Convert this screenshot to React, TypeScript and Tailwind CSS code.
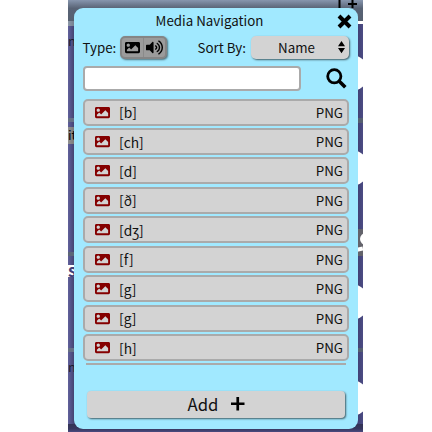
import React from "react";
import { FaImage, FaVolumeUp } from "react-icons/fa";

const items = ["[b]", "[ch]", "[d]", "[ð]", "[dʒ]", "[f]", "[g]", "[g]", "[h]"];

function Node() {
  return <div className="-ml-[16px] h-[36px] w-[36px] shrink-0 rounded-full bg-white" />;
}

/* The dimmed page that shows around the dialog */
function Backdrop() {
  return (
    <div className="col-start-1 row-start-1 ml-[68px] flex h-[432px] w-[294.5px] flex-col overflow-hidden bg-[#3b3b66]">
      <div className="flex h-[21px] shrink-0 justify-end bg-linear-to-b from-[#8796ae] via-[#586375] via-40% to-[#566070]">
        <svg viewBox="0 0 26 20" className="h-[20px] w-[26px]" stroke="black" strokeWidth="2" fill="none">
          <path d="M2.5 0V8M11 4H20M15.5 0V8" />
        </svg>
      </div>
      <div className="flex h-[403px] shrink-0 justify-between">
        <div className="flex w-[16px] flex-col overflow-hidden bg-linear-to-r from-[#61619c] via-[#42426f] via-40% to-[#333355] text-[13px] text-[#1b1b2c]">
          <div className="h-[5px] shrink-0 bg-linear-to-r from-[#8d99aa] to-[#4d5663]" />
          <div className="h-[92px] shrink-0 pt-[5px] leading-[19px]">n</div>
          <div className="h-[4px] shrink-0 bg-[#667085]" />
          <div className="h-[5px] shrink-0" />
          <div className="h-[17px] shrink-0 bg-linear-to-r from-[#929292] to-[#555] leading-[16px] text-black">it</div>
          <div className="h-[108px] shrink-0" />
          <div className="h-[4px] shrink-0 bg-[#5c6678]" />
          <div className="h-[9px] shrink-0" />
          <div className="h-[12px] shrink-0 bg-white text-[17px] font-bold leading-[9px] text-[#404078]">s</div>
          <div className="h-[71px] shrink-0" />
          <div className="h-[4px] shrink-0 bg-[#667085]" />
          <div className="pt-[5px] leading-[19px]">n</div>
        </div>
        <div className="flex w-[14px] flex-col overflow-hidden bg-linear-to-l from-[#4c4c84] via-[#404073] via-40% to-[#333355]">
          <div className="h-[3px] shrink-0 bg-white" />
          <div className="h-[30.5px] shrink-0" />
          <Node />
          <div className="h-[27.5px] shrink-0" />
          <div className="h-[5px] shrink-0 bg-[#555f70]" />
          <div className="h-[27px] shrink-0" />
          <Node />
          <div className="h-[43px] shrink-0" />
          <div className="flex h-[27px] shrink-0 flex-col items-end bg-[#63636b] pt-[4px]">
            <div className="-mr-[9px] h-[12px] w-[12px] shrink-0 rounded-full bg-white" />
            <div className="mt-[3px] h-[4px] w-[14px] shrink-0 -rotate-12 bg-white" />
          </div>
          <div className="h-[28px] shrink-0" />
          <Node />
          <div className="h-[28px] shrink-0" />
          <div className="h-[4px] shrink-0 bg-[#555f70]" />
          <div className="h-[28px] shrink-0" />
          <Node />
        </div>
      </div>
      <div className="flex-1 bg-linear-to-b from-[#333355] via-[#37375e] via-60% to-[#4a4a80]" />
    </div>
  );
}

export default function App() {
  return (
    <div className="grid h-[432px] w-[432px] grid-cols-1 grid-rows-1 overflow-hidden bg-white font-['Noto_Sans_CJK_SC','Noto_Sans',sans-serif] text-[13.33px] text-[#111]">
      <Backdrop />
      <div className="z-10 col-start-1 row-start-1 ml-[74px] mt-[7.5px] flex h-[421px] w-[284px] flex-col rounded-[9px] bg-[#a1e9ff] pl-[8.5px] pr-[9px]">
        <header className="flex h-[27px] items-center">
          <h1 className="flex-1 pb-px text-center">Media Navigation</h1>
          <svg viewBox="0 0 15 15" className="-mr-[2.5px] h-[15px] w-[15px]">
            <path d="M2 2L13 13M13 2L2 13" stroke="black" strokeWidth="4" fill="none" />
          </svg>
        </header>
        <div className="flex h-[25px] items-center">
          <span className="pt-px">Type:</span>
          <div className="ml-[4px] flex h-[23px] w-[46.5px] rounded-[5px] border-2 border-[#858585] bg-[#9b9b9b] text-black shadow-[1px_1px_2px_rgba(0,0,0,0.5)]">
            <div className="flex flex-1 items-center justify-center border-r border-[#8a8a8a]"><FaImage size={15} /></div>
            <div className="flex flex-1 items-center justify-center"><FaVolumeUp size={17} /></div>
          </div>
          <span className="ml-auto pt-px">Sort By:</span>
          <div className="ml-[5px] flex h-[23px] w-[98px] items-center rounded-[5px] bg-[#d3d3d3] pr-1 shadow-[1px_1px_2px_rgba(0,0,0,0.6)]">
            <span className="flex-1 pl-[4px] pt-px text-center">Name</span>
            <svg viewBox="0 0 8 14" className="h-[14px] w-[7px]"><path d="M4 0L8 6H0ZM4 14L0 8H8Z" /></svg>
          </div>
        </div>
        <div className="mt-[6px] flex h-[25.5px] items-center justify-between">
          <input aria-label="Search" className="h-[25.5px] w-[218.5px] rounded-[4px] border-2 border-[#aaa] bg-white px-2 outline-none" />
          <svg viewBox="0 0 21 21" className="mr-[2.5px] h-[21px] w-[21px]" fill="none" stroke="black">
            <circle cx="8.3" cy="8.3" r="6.6" strokeWidth="2.8" />
            <path d="M13 13L19.3 19.3" strokeWidth="3.6" />
          </svg>
        </div>
        <div className="mt-[7.5px] h-[266px] shrink-0 overflow-hidden">
          {items.map((name, i) => (
            <div key={i} className="mb-[2.45px] flex h-[27px] items-center rounded-[5px] border-2 border-[#aaa] bg-[#d3d3d3] pl-[10px] pr-[4px]">
              <FaImage size={15} color="#850000" />
              <span className="ml-[9.5px] flex-1 pt-px text-[13.8px]">{name}</span>
              <span className="pt-px">PNG</span>
            </div>
          ))}
          <div className="mx-[3px] h-[1.5px] bg-[#aaa]" />
        </div>
        <button className="ml-[4px] mr-[4px] mt-[26px] flex h-[27px] shrink-0 items-center justify-center gap-[13px] rounded-[4px] bg-[#d3d3d3] pl-px pt-[2px] text-[16.7px] shadow-[1px_1px_2px_rgba(0,0,0,0.6)]">
          <span>Add</span>
          <svg viewBox="0 0 14 14" className="mb-[2px] h-[13.5px] w-[13.5px]"><path d="M7 0V14M0 7H14" stroke="black" strokeWidth="2.8" /></svg>
        </button>
      </div>
    </div>
  );
}
